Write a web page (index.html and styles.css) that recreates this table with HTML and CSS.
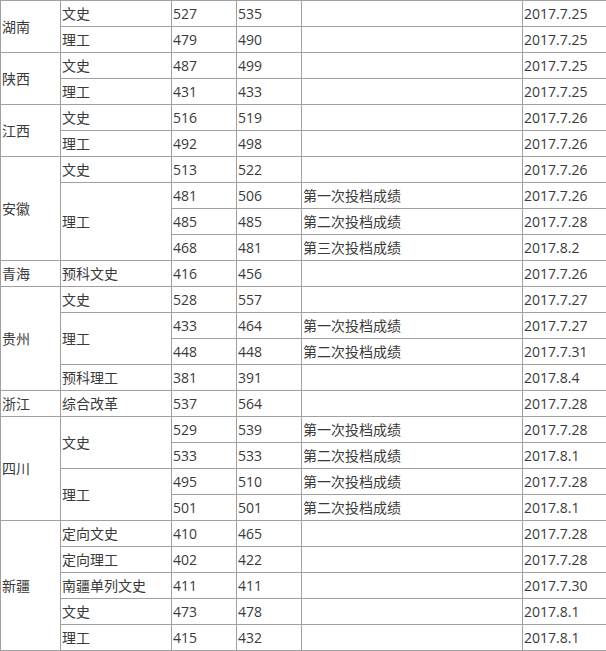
FILE: index.html
```html
<!DOCTYPE html>
<html lang="zh">
<head>
<meta charset="utf-8">
<link rel="stylesheet" href="styles.css">
</head>
<body>
<div class="frame">
<table class="score">
<colgroup>
<col class="c-prov"><col class="c-type"><col class="c-num"><col class="c-num"><col class="c-note"><col class="c-date">
</colgroup>
<tbody>
<tr><td rowspan="2">湖南</td><td>文史</td><td>527</td><td>535</td><td></td><td>2017.7.25</td></tr>
<tr><td>理工</td><td>479</td><td>490</td><td></td><td>2017.7.25</td></tr>
<tr><td rowspan="2">陕西</td><td>文史</td><td>487</td><td>499</td><td></td><td>2017.7.25</td></tr>
<tr><td>理工</td><td>431</td><td>433</td><td></td><td>2017.7.25</td></tr>
<tr><td rowspan="2">江西</td><td>文史</td><td>516</td><td>519</td><td></td><td>2017.7.26</td></tr>
<tr><td>理工</td><td>492</td><td>498</td><td></td><td>2017.7.26</td></tr>
<tr><td rowspan="4">安徽</td><td>文史</td><td>513</td><td>522</td><td></td><td>2017.7.26</td></tr>
<tr><td rowspan="3">理工</td><td>481</td><td>506</td><td>第一次投档成绩</td><td>2017.7.26</td></tr>
<tr><td>485</td><td>485</td><td>第二次投档成绩</td><td>2017.7.28</td></tr>
<tr><td>468</td><td>481</td><td>第三次投档成绩</td><td>2017.8.2</td></tr>
<tr><td>青海</td><td>预科文史</td><td>416</td><td>456</td><td></td><td>2017.7.26</td></tr>
<tr><td rowspan="4">贵州</td><td>文史</td><td>528</td><td>557</td><td></td><td>2017.7.27</td></tr>
<tr><td rowspan="2">理工</td><td>433</td><td>464</td><td>第一次投档成绩</td><td>2017.7.27</td></tr>
<tr><td>448</td><td>448</td><td>第二次投档成绩</td><td>2017.7.31</td></tr>
<tr><td>预科理工</td><td>381</td><td>391</td><td></td><td>2017.8.4</td></tr>
<tr><td>浙江</td><td>综合改革</td><td>537</td><td>564</td><td></td><td>2017.7.28</td></tr>
<tr><td rowspan="4">四川</td><td rowspan="2">文史</td><td>529</td><td>539</td><td>第一次投档成绩</td><td>2017.7.28</td></tr>
<tr><td>533</td><td>533</td><td>第二次投档成绩</td><td>2017.8.1</td></tr>
<tr><td rowspan="2">理工</td><td>495</td><td>510</td><td>第一次投档成绩</td><td>2017.7.28</td></tr>
<tr><td>501</td><td>501</td><td>第二次投档成绩</td><td>2017.8.1</td></tr>
<tr><td rowspan="5">新疆</td><td>定向文史</td><td>410</td><td>465</td><td></td><td>2017.7.28</td></tr>
<tr><td>定向理工</td><td>402</td><td>422</td><td></td><td>2017.7.28</td></tr>
<tr><td>南疆单列文史</td><td>411</td><td>411</td><td></td><td>2017.7.30</td></tr>
<tr><td>文史</td><td>473</td><td>478</td><td></td><td>2017.8.1</td></tr>
<tr><td>理工</td><td>415</td><td>432</td><td></td><td>2017.8.1</td></tr>
</tbody>
</table>
</div>
</body>
</html>
```
FILE: styles.css
```css
html, body {
  margin: 0;
  padding: 0;
  background: #ffffff;
  overflow: hidden;
}
.frame {
  width: 606px;
  height: 651px;
  overflow: hidden;
}
.score {
  border-collapse: collapse;
  table-layout: fixed;
  width: 642px;
  font-family: "Open Sans", "Noto Sans CJK SC", sans-serif;
  font-size: 14px;
  color: #3a3a3a;
}
.c-prov { width: 60px; }
.c-type { width: 111px; }
.c-num { width: 65px; }
.c-note { width: 221px; }
.c-date { width: 120px; }
.score td {
  border: 1px solid #a0a0a0;
  height: 26px;
  padding: 0 0 0 1px;
  box-sizing: border-box;
  vertical-align: middle;
  white-space: nowrap;
  line-height: 20px;
}
```
